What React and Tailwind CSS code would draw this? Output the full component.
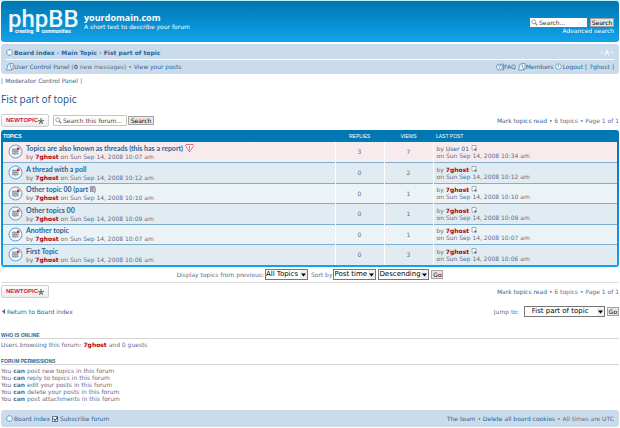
const topics = [
  { title: 'Topics are also known as threads (this has a report)', time: '10:07', replies: 3, views: 7, last: 'User 01', lastTime: '10:34', reported: true },
  { title: 'A thread with a poll', time: '10:12', replies: 0, views: 2, last: '7ghost', lastTime: '10:12' },
  { title: 'Other topic 00 (part II)', time: '10:10', replies: 0, views: 1, last: '7ghost', lastTime: '10:10' },
  { title: 'Other topics 00', time: '10:09', replies: 0, views: 1, last: '7ghost', lastTime: '10:09' },
  { title: 'Another topic', time: '10:07', replies: 0, views: 1, last: '7ghost', lastTime: '10:07' },
  { title: 'First Topic', time: '10:06', replies: 0, views: 3, last: '7ghost', lastTime: '10:06' },
];

const permissions = [
  'post new topics in this forum',
  'reply to topics in this forum',
  'edit your posts in this forum',
  'delete your posts in this forum',
  'post attachments in this forum',
];

const Link = ({ children, className = '' }) => (
  <a href="#" className={`text-[#2a6595] ${className}`}>{children}</a>
);

const User = ({ name = '7ghost' }) => (
  <a href="#" className={name === '7ghost' ? 'font-bold text-[#b00018]' : 'text-[#2a6595]'}>{name}</a>
);

const HomeIcon = () => (
  <svg className="size-[7px] shrink-0" viewBox="0 0 14 14" fill="#f4fafd" stroke="#4a9fd0" strokeWidth="2">
    <path d="M5 1.5h4l3.500 3.500v4L9 12.500H5L1.500 9V5z" />
  </svg>
);

const PeopleIcon = () => (
  <svg className="h-[8px] w-[8px] shrink-0" viewBox="0 0 16 16" fill="#eef5fa" stroke="#4f87b3" strokeWidth="1.5">
    <path d="M7 1h7v12H9" />
    <path d="M1 14c0-4 1-5 3-6-2-2-1-6 2-6s4 4 2 6c2 1 3 2 3 6z" />
  </svg>
);

const HelpIcon = () => (
  <svg className="size-[8px] shrink-0" viewBox="0 0 16 16" fill="none" stroke="#4f87b3" strokeWidth="1.5">
    <circle cx="7" cy="8" r="6" fill="#eef5fa" />
    <path d="M5 6c0-3 5-3 4 0-.5 1-2 1.500-2 3M7 10.500v1.500M12 2h3v12h-3" />
  </svg>
);

const PowerIcon = () => (
  <svg className="size-[7px] shrink-0" viewBox="0 0 14 14" fill="none" stroke="#5d93bd" strokeWidth="1.5">
    <circle cx="7" cy="7" r="5.500" fill="#eef5fa" />
    <path d="M7 3v5" />
  </svg>
);

const SearchIcon = () => (
  <svg className="size-[7px] shrink-0" viewBox="0 0 14 14" fill="none" stroke="#7d8790" strokeWidth="1.5">
    <circle cx="5.500" cy="5.500" r="4" />
    <path d="M8.500 8.500l4 4" strokeWidth="2.500" />
  </svg>
);

const TopicIcon = () => (
  <svg className="size-[15px]" viewBox="0 0 30 30">
    <circle cx="15" cy="15" r="13" fill="#f3f8fb" stroke="#5f9fd0" strokeWidth="2" />
    <path d="M8 9h13v12h-5l-3 3v-3H8z" fill="#b4b9be" />
    <path d="M8 11h10M8 15h13M8 19h13" stroke="#8f959b" strokeWidth="1.500" />
    <path d="M18 7h5v5h-5z" fill="#d4304f" />
  </svg>
);

const ReportIcon = () => (
  <svg className="h-[8px] w-[9px]" viewBox="0 0 18 16" fill="#fff" stroke="#cf4a62" strokeWidth="1.500">
    <path d="M2 1h14l1 2-7 12H8L1 3z" />
    <path d="M9 4v5M9 10.500v2" strokeWidth="2" />
  </svg>
);

const LatestIcon = () => (
  <svg className="ml-[2px] inline size-[6px] align-baseline" viewBox="0 0 12 12" fill="none" stroke="#8d959c" strokeWidth="1.500">
    <path d="M6 10H2V1h8v5" fill="#fff" />
    <path d="M7 7h4v4H7z" fill="#555" stroke="none" />
  </svg>
);

const FontSizeIcon = () => (
  <svg className="h-[7px] w-[14px]" viewBox="0 0 28 14" fill="none" stroke="#f3f9fd" strokeWidth="2">
    <path d="M1 6l3 3 3-3M10 13l4-11 4 11M11.500 9h5M21 8l3-3 3 3" />
  </svg>
);

const NewTopic = () => (
  <button className="flex h-[13px] w-[48px] items-center justify-center rounded-[2px] border border-[#cfcfcf] bg-linear-to-b from-white to-[#ececec] font-['Liberation_Sans'] text-[6px] font-bold text-[#cf2149]">
    NEWTOPIC
    <svg className="size-[6px]" viewBox="0 0 12 12" stroke="#777" strokeWidth="2.500">
      <path d="M6 0v6M0 4.500L6 6l6-1.500M2.500 11.500L6 6l3.500 5.500" fill="none" />
    </svg>
  </button>
);

const GreyButton = ({ children, className }) => (
  <button className={`flex items-center justify-center border border-[#a3a3a3] bg-[#e6e6e6] text-black ${className}`}>{children}</button>
);

const Select = ({ label, value, className }) => (
  <span className={`relative block ${className}`}>
    <select aria-label={label} className="block h-[11px] w-full appearance-none border border-[#777] bg-white p-0 text-[7px] leading-[9px] text-black">
      <option>{value}</option>
    </select>
    <svg className="pointer-events-none absolute top-px right-px h-[9px] w-[7px] bg-[#efefef]" viewBox="0 0 7 9">
      <path d="M1 3.500h5L3.500 6.500z" fill="#000" />
    </svg>
  </span>
);

const Pagination = () => (
  <p>
    <Link>Mark topics read</Link> • 6 topics • Page 1 of 1
  </p>
);

const Header = () => (
  <header className="flex h-[41px] items-center justify-between rounded-[3px] bg-linear-to-b from-[#0076b1] to-[#12a3eb] pr-[5px] pl-[7px] text-white">
    <div className="flex items-center gap-[6px]">
      <a href="#" className="block w-[70px] font-[Roboto]">
        <span className="block text-[24px] leading-[20px] font-medium text-[#eef7fc]">phpBB</span>
        <span className="flex gap-[8px] pl-[7px] text-[5px] leading-[5px] font-bold">
          <span>creating</span>
          <span>communities</span>
        </span>
      </a>
      <div className="pb-px">
        <h1 className="font-['Open_Sans'] text-[9px] leading-[11px] font-bold">yourdomain.com</h1>
        <p className="leading-[8px]">A short text to describe your forum</p>
      </div>
    </div>
    <form className="flex flex-col items-end pt-[10px]">
      <div className="flex items-center gap-[3px]">
        <label className="flex h-[9px] w-[57px] items-center gap-px bg-white pl-px">
          <SearchIcon />
          <input aria-label="Search" placeholder="Search..." className="w-full min-w-0 text-[6px] leading-[8px] placeholder:text-[#333]" />
        </label>
        <GreyButton className="h-[9px] w-[24px] text-[6px]">Search</GreyButton>
      </div>
      <a href="#" className="leading-[8px]">Advanced search</a>
    </form>
  </header>
);

const Navbar = () => (
  <nav className="mt-[2px] rounded-[3px] bg-[#cadceb] px-[5px] py-px">
    <div className="flex h-[15px] items-center justify-between border-b border-white">
      <div className="flex items-center gap-px font-bold">
        <HomeIcon />
        <p><Link>Board index</Link> ‹ <Link>Main Topic</Link> ‹ <Link>Fist part of topic</Link></p>
      </div>
      <FontSizeIcon />
    </div>
    <div className="flex h-[13px] items-center justify-between">
      <div className="flex items-center">
        <PeopleIcon />
        <p><Link>User Control Panel</Link> (<b>0</b> new messages) • <Link>View your posts</Link></p>
      </div>
      <div className="flex items-center gap-[2px]">
        <span className="flex items-center"><HelpIcon /><Link>FAQ</Link></span>
        <span className="flex items-center"><PeopleIcon /><Link>Members</Link></span>
        <span className="flex items-center"><PowerIcon /><Link>Logout [ 7ghost ]</Link></span>
      </div>
    </div>
  </nav>
);

const TopicTable = () => (
  <div className="mt-[3px] rounded-[3px] bg-linear-to-b from-[#0076b1] to-[#12a3eb] px-[2px] pb-[2px]">
    <table className="w-full table-fixed border-collapse">
      <colgroup>
        <col />
        <col className="w-[49px]" />
        <col className="w-[49px]" />
        <col className="w-[184px]" />
      </colgroup>
      <thead className="font-['Liberation_Sans'] text-[5px] leading-[12px] text-white">
        <tr>
          <th className="text-left font-bold">TOPICS</th>
          <th className="font-normal">REPLIES</th>
          <th className="font-normal">VIEWS</th>
          <th className="pl-[3px] text-left font-normal">LAST POST</th>
        </tr>
      </thead>
      <tbody>
        {topics.map((t, i) => (
          <tr
            key={t.title}
            className={`border-b border-[#7fb0d0] last:border-b-0 ${i % 2 ? 'h-[21px]' : 'h-[20px]'} ${t.reported ? 'bg-[#f7ebed]' : i % 2 ? 'bg-[#e1ebf2]' : 'bg-[#ecf3f7]'}`}
          >
            <td className="p-0">
              <div className="flex items-center gap-[3px] pl-[5px]">
                <TopicIcon />
                <div>
                  <div className="flex items-center gap-[2px] font-[Lato] text-[7px] leading-[9px] font-bold">
                    <Link>{t.title}</Link>
                    {t.reported && <ReportIcon />}
                  </div>
                  <p>by <User /> on Sun Sep 14, 2008 {t.time} am</p>
                </div>
              </div>
            </td>
            <td className="border-l border-white p-0 text-center">{t.replies}</td>
            <td className="border-l border-white p-0 text-center">{t.views}</td>
            <td className="border-l border-white p-0 pl-[3px]">
              <p>by <User name={t.last} /><LatestIcon /></p>
              <p>on Sun Sep 14, 2008 {t.lastTime} am</p>
            </td>
          </tr>
        ))}
      </tbody>
    </table>
  </div>
);

const SectionTitle = ({ children }) => (
  <h3 className="border-b border-[#d5d5d5] font-['Liberation_Sans'] text-[5px] leading-[6px] font-bold text-[#2a6595]">{children}</h3>
);

export default function App() {
  return (
    <div className="border-t border-[#bdf0fb] bg-white pr-px pl-px font-['DejaVu_Sans',sans-serif] text-[6px] leading-[7px] text-[#5f6e88]">
      <Header />
      <Navbar />

      <p className="mt-[3px]">[ <Link>Moderator Control Panel</Link> ]</p>
      <h2 className="mt-[8px] font-['Open_Sans'] text-[10px] leading-[14px] text-[#105289]">Fist part of topic</h2>

      <div className="mt-[8px] flex items-center justify-between">
        <div className="flex items-center">
          <NewTopic />
          <label className="ml-[4px] flex h-[11px] w-[74px] items-center gap-px rounded-[1px] border border-[#c7c3bf] pl-px">
            <SearchIcon />
            <input aria-label="Search this forum" placeholder="Search this forum..." className="w-full min-w-0 text-[6px] leading-[9px] placeholder:text-[#444]" />
          </label>
          <GreyButton className="ml-px h-[9px] w-[26px] text-[6px]">Search</GreyButton>
        </div>
        <Pagination />
      </div>

      <TopicTable />

      <form className="flex items-center justify-center border-b border-[#dcdcdc] pt-[2px] pb-[2px]">
        <span>Display topics from previous:</span>
        <Select label="Display topics from previous" value="All Topics" className="ml-px w-[43px]" />
        <span className="ml-[3px]">Sort by</span>
        <Select label="Sort by" value="Post time" className="ml-px w-[43px]" />
        <Select label="Direction" value="Descending" className="ml-[2px] w-[51px]" />
        <GreyButton className="ml-[2px] h-[9px] w-[12px] text-[6px]">Go</GreyButton>
      </form>

      <div className="mt-[2px] flex items-center justify-between">
        <NewTopic />
        <Pagination />
      </div>

      <div className="mt-[8px] flex items-center justify-between">
        <p className="flex items-center gap-[2px] pl-px">
          <svg className="h-[5px] w-[3px]" viewBox="0 0 3 5"><path d="M3 0v5L0 2.500z" fill="#536482" /></svg>
          <Link>Return to Board index</Link>
        </p>
        <form className="flex items-center">
          <span>Jump to:</span>
          <Select label="Jump to" value="&nbsp;&nbsp;&nbsp;Fist part of topic" className="ml-[5px] w-[81px]" />
          <GreyButton className="ml-[2px] h-[9px] w-[12px] text-[6px]">Go</GreyButton>
        </form>
      </div>

      <section className="mt-[15px]">
        <SectionTitle>WHO IS ONLINE</SectionTitle>
        <p className="mt-[2px]">Users browsing this forum: <User /> and 0 guests</p>
      </section>

      <section className="mt-[10px]">
        <SectionTitle>FORUM PERMISSIONS</SectionTitle>
        <div className="mt-[2px]">
          {permissions.map((p) => (
            <p key={p}>You <b>can</b> {p}</p>
          ))}
        </div>
      </section>

      <footer className="mt-[8px] flex h-[17px] items-center justify-between rounded-[3px] bg-[#cadceb] px-[5px]">
        <div className="flex items-center gap-px">
          <HomeIcon />
          <Link>Board index</Link>
          <label className="relative flex items-center gap-[2px] pl-px text-[#2a6595]">
            <input type="checkbox" defaultChecked className="peer size-[6px] appearance-none border border-[#5c7c98] bg-white" />
            <svg className="pointer-events-none absolute left-px hidden size-[6px] peer-checked:block" viewBox="0 0 12 12" fill="none" stroke="#123" strokeWidth="2">
              <path d="M3 5l3 4 5-7" />
            </svg>
            Subscribe forum
          </label>
        </div>
        <p><Link>The team</Link> • <Link>Delete all board cookies</Link> • All times are UTC</p>
      </footer>
    </div>
  );
}
